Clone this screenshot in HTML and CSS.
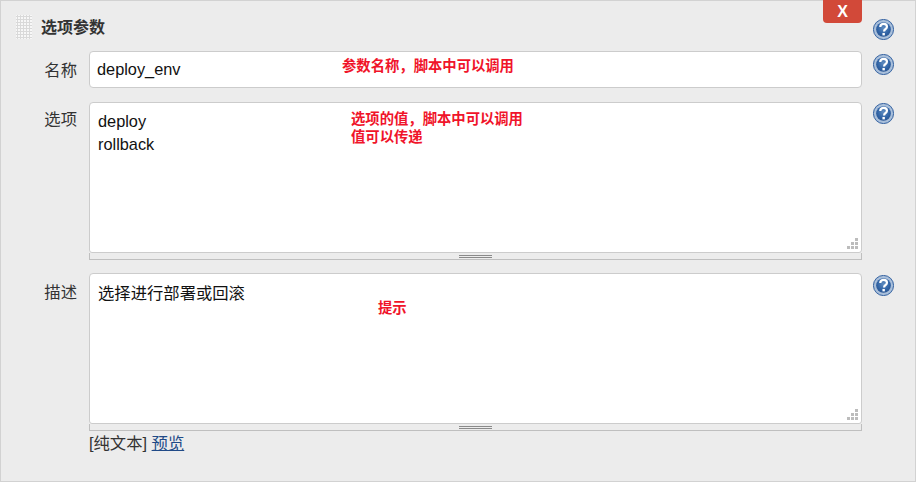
FILE: index.html
```html
<!DOCTYPE html>
<html lang="zh">
<head>
<meta charset="utf-8">
<title>选项参数</title>
<link rel="stylesheet" href="styles.css">
</head>
<body>
<svg class="defs" width="0" height="0" aria-hidden="true">
  <defs>
    <radialGradient id="helpFill" cx="50%" cy="40%" r="60%">
      <stop offset="0" stop-color="#5f8cc0"/>
      <stop offset="0.7" stop-color="#2f62a4"/>
      <stop offset="1" stop-color="#2a5592"/>
    </radialGradient>
    <symbol id="help" viewBox="0 0 20 20">
      <circle cx="10" cy="10" r="9.6" fill="#a9bfda" stroke="#2b5a9c" stroke-width=".9"/>
      <circle cx="10" cy="10" r="7" fill="url(#helpFill)"/>
      <path d="M6.9 7.5C6.9 5.6 8.3 4.6 10.1 4.6s3.2 1 3.2 2.7c0 1.3-.8 1.9-1.6 2.5-.8.5-1.1 1-1.1 1.8v.3" fill="none" stroke="#fff" stroke-width="2.1"/>
      <rect x="9" y="13.3" width="2.3" height="2.3" fill="#fff"/>
    </symbol>
    <symbol id="grip" viewBox="0 0 11 11">
      <g fill="#bcbcbc">
        <rect x="8" y="0" width="3" height="3"/>
        <rect x="4" y="4" width="3" height="3"/>
        <rect x="8" y="4" width="3" height="3"/>
        <rect x="0" y="8" width="3" height="3"/>
        <rect x="4" y="8" width="3" height="3"/>
        <rect x="8" y="8" width="3" height="3"/>
      </g>
    </symbol>
  </defs>
</svg>
<main class="panel">
  <button class="delete" type="button">X</button>

  <header class="row head">
    <div class="handle"></div>
    <h2 class="title">选项参数</h2>
    <svg class="help help-head"><use href="#help"/></svg>
  </header>

  <div class="row row-name">
    <label class="label">名称</label>
    <div class="field">
      <input class="input" type="text" value="deploy_env">
    </div>
    <svg class="help"><use href="#help"/></svg>
  </div>

  <div class="row row-options">
    <label class="label">选项</label>
    <div class="field">
      <div class="area">
        <textarea class="text">deploy
rollback</textarea>
        <svg class="grip"><use href="#grip"/></svg>
      </div>
      <div class="grippie"><span class="grippie-bar"></span></div>
    </div>
    <svg class="help"><use href="#help"/></svg>
  </div>

  <div class="row row-desc">
    <label class="label">描述</label>
    <div class="field">
      <div class="area area-desc">
        <textarea class="text">选择进行部署或回滚</textarea>
        <svg class="grip"><use href="#grip"/></svg>
      </div>
      <div class="grippie"><span class="grippie-bar"></span></div>
      <p class="format">[纯文本] <a class="link" href="#">预览</a></p>
    </div>
    <svg class="help"><use href="#help"/></svg>
  </div>

  <span class="note note-name">参数名称，脚本中可以调用</span>
  <span class="note note-options">选项的值，脚本中可以调用<br>值可以传递</span>
  <span class="note note-desc">提示</span>
</main>
</body>
</html>
```
FILE: styles.css
```css
* { box-sizing: border-box; }
html, body { margin: 0; padding: 0; }
body {
  width: 916px;
  height: 482px;
  overflow: hidden;
  font-family: "Liberation Sans", "Noto Sans CJK SC", sans-serif;
  color: #333;
}
.defs { position: absolute; }
.panel {
  position: relative;
  width: 916px;
  height: 482px;
  background: #ececec;
  border: 1px solid #d2d2d2;
  padding-top: 14px;
}
.row {
  display: flex;
  align-items: flex-start;
}
.head {
  height: 36px;
  padding-left: 15px;
}
.handle {
  width: 16px;
  height: 24px;
  background-color: #f7f7f7;
  background-image: radial-gradient(circle at 1.5px 1.5px, #d9d9d9 1px, transparent 1.3px);
  background-size: 3px 3px;
}
.title {
  margin: 3px 0 0 9px;
  font-size: 16px;
  line-height: 20px;
  font-weight: 700;
  color: #333;
  flex: 0 0 811px;
}
.help {
  width: 21px;
  height: 21px;
  flex: none;
  margin-left: 11px;
  margin-top: 1px;
}
.head .help { margin: 4px 0 0 21px; }
.row-name .help { margin-top: 3px; }
.row-desc .help { margin-top: 2px; }
.label {
  width: 76px;
  flex: none;
  text-align: right;
  font-size: 16.33px;
  line-height: 22px;
  color: #333;
  margin-top: 6px;
}
.row-name .label,
.row-desc .label { margin-top: 8px; }
.field {
  width: 773px;
  flex: none;
  margin-left: 12px;
}
.row-name { height: 51px; }
.row-options { height: 171px; }
.input {
  display: block;
  width: 100%;
  height: 37px;
  background: #fff;
  border: 1px solid #ccc;
  border-radius: 4px;
  padding: 0 7px;
  font: 16.33px "Liberation Sans", sans-serif;
  color: #111;
  outline: 0;
}
.area {
  position: relative;
  height: 151px;
  background: #fff;
  border: 1px solid #ccc;
  border-radius: 4px 4px 3px 3px;
  overflow: hidden;
}
.text {
  display: block;
  width: 100%;
  height: 100%;
  border: 0;
  margin: 0;
  padding: 7px 8px;
  background: transparent;
  resize: none;
  overflow: hidden;
  outline: 0;
  font: 16.33px/23px "Liberation Sans", "Noto Sans CJK SC", sans-serif;
  color: #111;
}
.area-desc .text { padding-top: 8px; }
.grip {
  position: absolute;
  right: 3px;
  bottom: 3px;
  width: 11px;
  height: 11px;
}
.grippie {
  display: flex;
  justify-content: center;
  align-items: flex-start;
  height: 7px;
  background: #ececec;
  border: 1px solid #bfbfbf;
  border-top: 0;
}
.grippie-bar {
  width: 33px;
  height: 3px;
  margin-top: 2px;
  border-top: 1px solid #8a8a8a;
  border-bottom: 1px solid #8a8a8a;
}
.format {
  margin: 1px 0 0;
  font-size: 16.33px;
  line-height: 22px;
  color: #333;
}
.link { color: #204a87; }
.delete {
  position: absolute;
  top: -1px;
  left: 822px;
  width: 39px;
  height: 23px;
  padding: 0;
  border: 0;
  border-radius: 0 0 4px 4px;
  background: #d24939;
  color: #fff;
  font: 700 16px/20px "Liberation Sans", sans-serif;
}
.note {
  position: absolute;
  font-size: 14.33px;
  line-height: 18px;
  font-weight: 700;
  color: #f0142a;
  white-space: nowrap;
}
.note-name { left: 341px; top: 56px; }
.note-options { left: 350px; top: 109px; }
.note-desc { left: 377px; top: 298px; }
```
